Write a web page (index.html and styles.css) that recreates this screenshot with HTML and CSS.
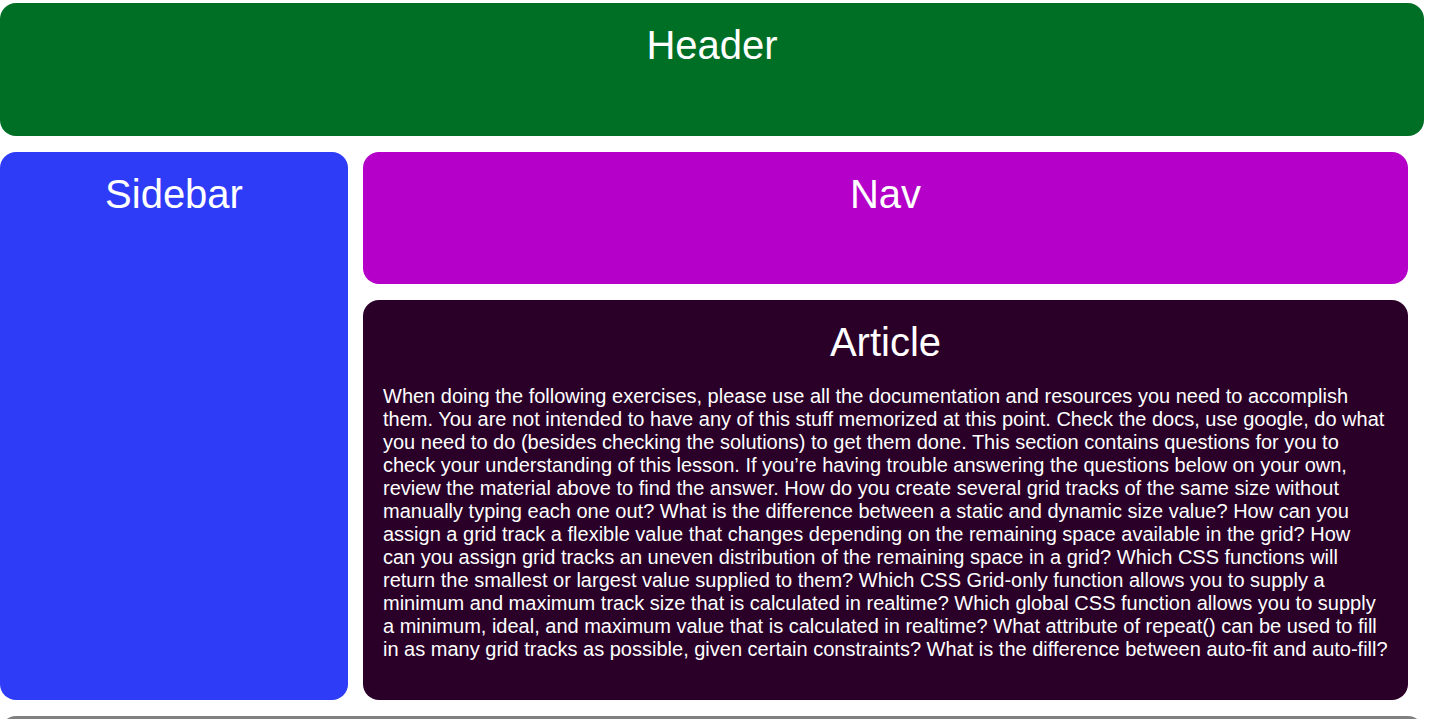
FILE: index.html
```html
<!DOCTYPE html>
<html lang="en">
<head>
<meta charset="utf-8">
<title>Grid Layout</title>
<link rel="stylesheet" href="styles.css">
</head>
<body>
<div class="page">
  <header class="box header"><h2 class="title">Header</h2></header>
  <aside class="box sidebar"><h2 class="title">Sidebar</h2></aside>
  <nav class="box nav"><h2 class="title">Nav</h2></nav>
  <article class="box article">
    <h2 class="title">Article</h2>
    <p class="text">When doing the following exercises, please use all the documentation and resources you need to accomplish them. You are not intended to have any of this stuff memorized at this point. Check the docs, use google, do what you need to do (besides checking the solutions) to get them done. This section contains questions for you to check your understanding of this lesson. If you’re having trouble answering the questions below on your own, review the material above to find the answer. How do you create several grid tracks of the same size without manually typing each one out? What is the difference between a static and dynamic size value? How can you assign a grid track a flexible value that changes depending on the remaining space available in the grid? How can you assign grid tracks an uneven distribution of the remaining space in a grid? Which CSS functions will return the smallest or largest value supplied to them? Which CSS Grid-only function allows you to supply a minimum and maximum track size that is calculated in realtime? Which global CSS function allows you to supply a minimum, ideal, and maximum value that is calculated in realtime? What attribute of repeat() can be used to fill in as many grid tracks as possible, given certain constraints? What is the difference between auto-fit and auto-fill?</p>
  </article>
  <footer class="box footer"><h2 class="title">Footer</h2></footer>
</div>
</body>
</html>
```

FILE: styles.css
```css
html, body {
  margin: 0;
  padding: 0;
  background: #ffffff;
}

body {
  font-family: "Liberation Sans", Arial, sans-serif;
  color: #ffffff;
}

.page {
  display: grid;
  width: 1424px;
  grid-template-columns: 348px 1045px 1fr;
  grid-template-rows: 133px 132px auto auto;
  column-gap: 15px;
  row-gap: 16px;
  margin: 3px 0 3px 0;
}

.box {
  border-radius: 16px;
  padding: 20px;
  box-sizing: border-box;
}

.title {
  margin: 0;
  font-size: 40px;
  font-weight: normal;
  text-align: center;
  line-height: normal;
}

.header {
  grid-column: 1 / -1;
  grid-row: 1;
  background: #006f26;
}

.sidebar {
  grid-column: 1;
  grid-row: 2 / 4;
  background: #2e3cf8;
}

.nav {
  grid-column: 2;
  grid-row: 2;
  background: #b400c8;
}

.article {
  grid-column: 2;
  grid-row: 3;
  background: #2a0029;
}

.text {
  margin: 20px 0 19px;
  font-size: 20px;
  line-height: 23px;
}

.footer {
  grid-column: 1 / -1;
  grid-row: 4;
  height: 82px;
  background: #808080;
}
```
